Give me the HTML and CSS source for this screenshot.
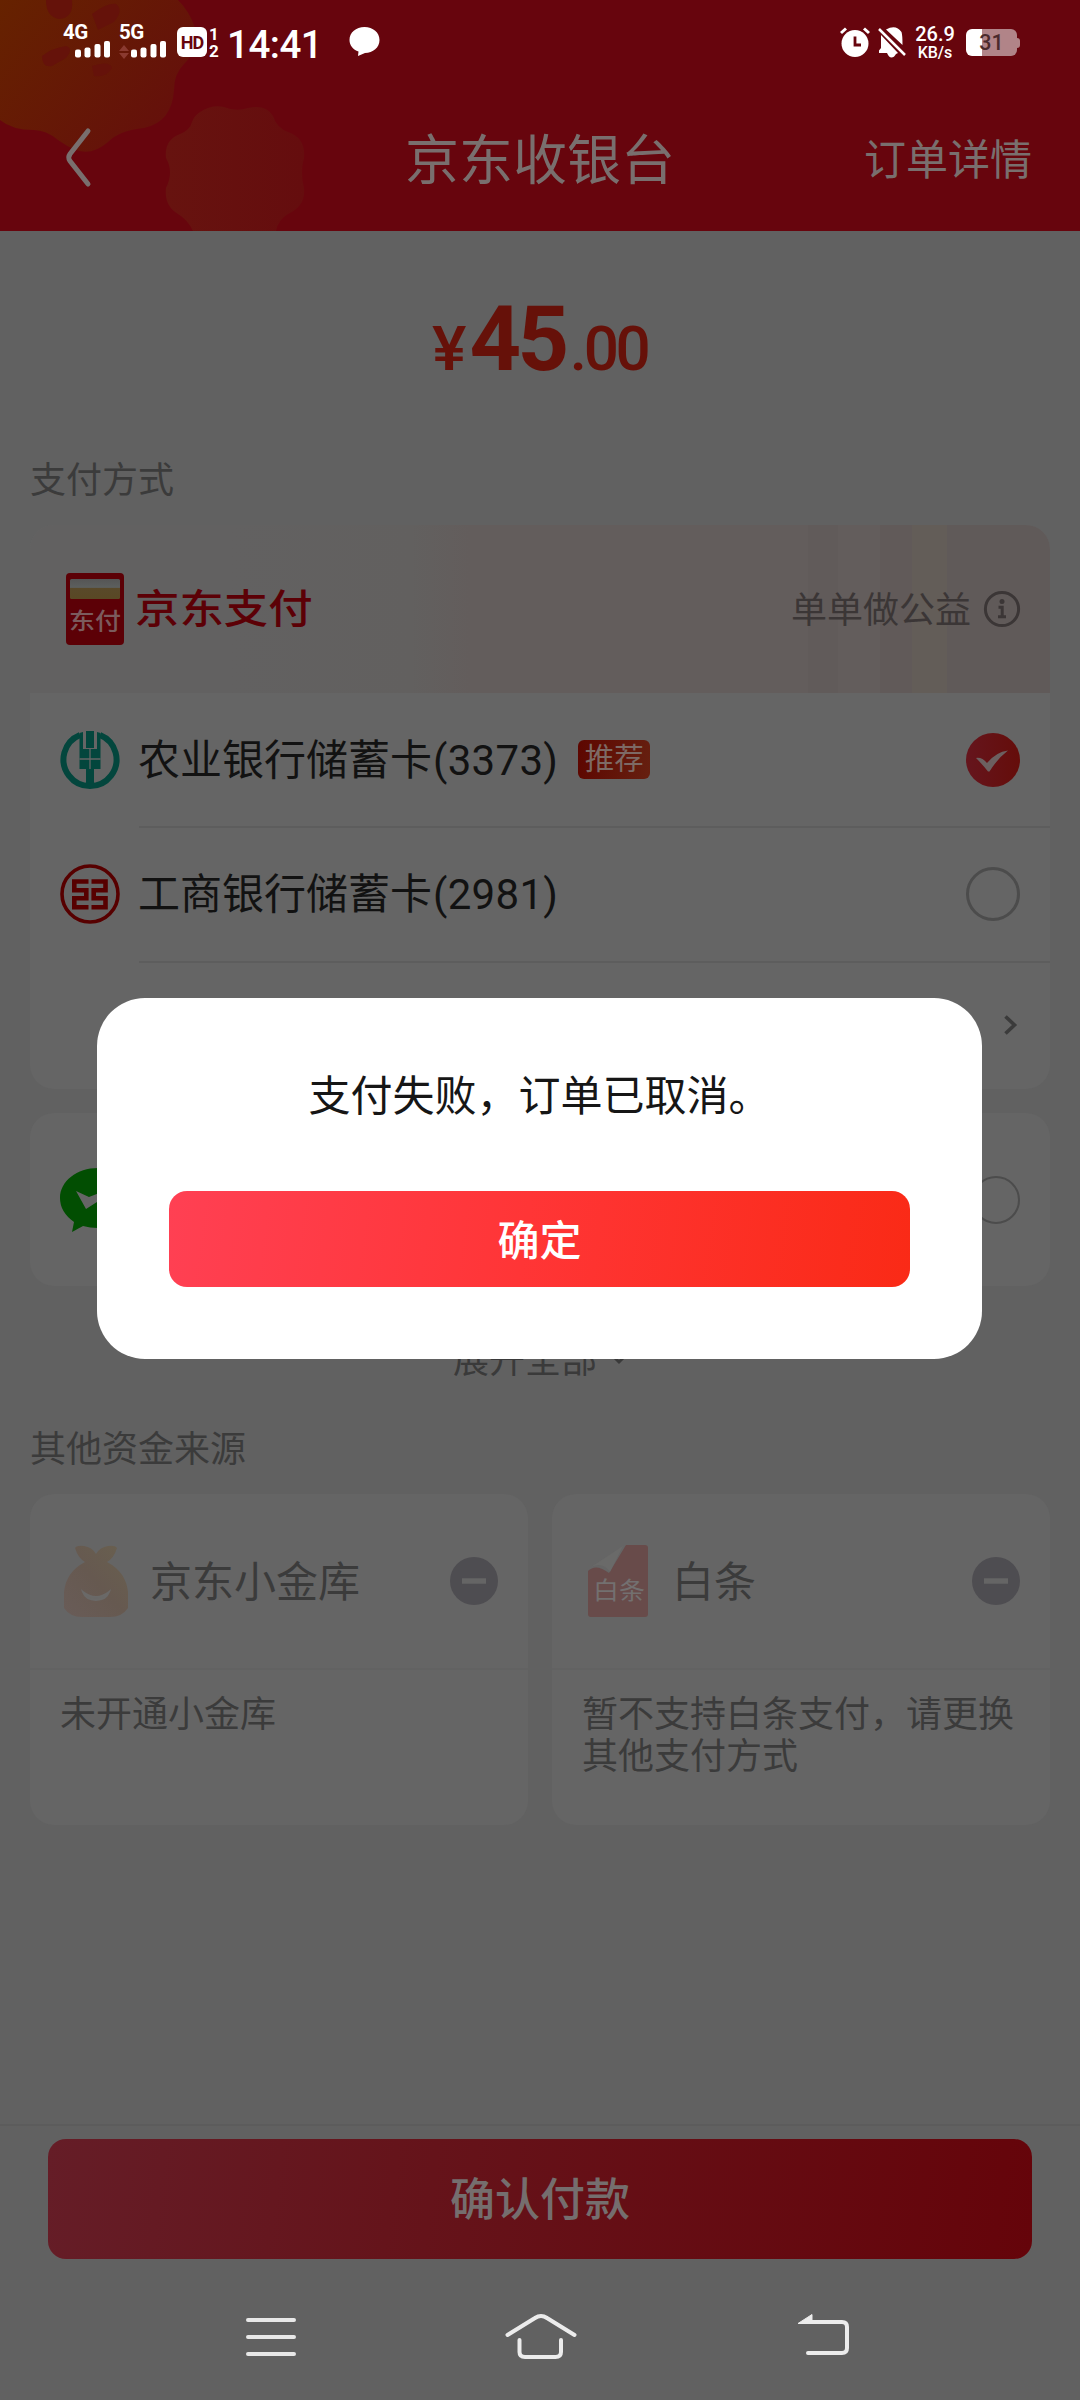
FILE: index.html
```html
<!DOCTYPE html>
<html lang="zh-CN">
<head>
<meta charset="utf-8">
<title>京东收银台</title>
<link rel="stylesheet" href="styles.css">
</head>
<body>
<header class="top">
  <svg class="top-art" width="320" height="231" viewBox="0 0 320 231" aria-hidden="true">
    <defs>
      <linearGradient id="flower" x1="0" y1="0" x2="1" y2=".6"><stop offset="0" stop-color="#662200"/><stop offset="1" stop-color="#65100b"/></linearGradient>
      <linearGradient id="flower2" x1="0" y1="0" x2="1" y2="0"><stop offset="0" stop-color="#67130f"/><stop offset="1" stop-color="#650d0e"/></linearGradient>
    </defs>
    <path fill="url(#flower)" d="M0 0H178Q190 12 195 28Q197 52 184 64Q174 74 174 90Q172 122 144 128Q120 130 108 142Q92 156 76 150Q66 146 58 140Q46 130 34 130Q12 130 0 120Z"/>
    <path fill="#65120a" d="M46 0H72Q74 18 59 19Q46 17 46 0ZM92 14Q108 2 116 4Q124 10 114 22L98 30ZM42 56Q52 48 66 46Q74 48 66 58L52 66Q42 68 42 56ZM92 66Q110 60 112 68Q106 78 94 76Z"/>
    <path fill="url(#flower2)" d="M200 112Q212 104 224 107Q236 112 248 108Q266 104 273 116Q277 128 288 132Q306 138 304 158Q300 172 304 188Q306 206 288 214Q278 220 276 231H193Q188 220 178 214Q164 206 166 188Q174 172 166 158Q164 140 180 134Q190 130 192 122Q194 116 200 112Z"/>
  </svg>
  <div class="status">
    <div class="status-left">
      <div class="sim"><span>4G</span><svg width="36" height="17" viewBox="0 0 36 17" fill="#fff"><rect x="0" y="8.500" width="6" height="8" rx="2"/><rect x="9.500" y="6.500" width="6" height="10" rx="2"/><rect x="19.500" y="3" width="6" height="13.500" rx="2"/><rect x="29" y="0" width="6" height="16.500" rx="2"/></svg></div>
      <div class="sim"><span>5G</span><svg width="48" height="19" viewBox="0 0 48 19"><path fill="#8a3a30" d="M5 4l5 6H0zM5 18l5-6H0z"/><g fill="#fff"><rect x="12" y="8.500" width="6" height="8" rx="2"/><rect x="21.500" y="6.500" width="6" height="10" rx="2"/><rect x="31.500" y="3" width="6" height="13.500" rx="2"/><rect x="41" y="0" width="6" height="16.500" rx="2"/></g></svg></div>
      <div class="hd">HD</div>
      <div class="hd-num"><span>1</span><span>2</span></div>
      <div class="clock">14:41</div>
      <svg class="bubble" width="31" height="31" viewBox="0 0 31 31"><path fill="#fff" d="M15.500 1C24 1 30.500 6.500 30.500 14S24 27 16 27l-7 3 .5-4.500C4 23.500.5 19.500.5 14 .5 6.500 7 1 15.500 1z"/></svg>
    </div>
    <div class="status-right">
      <svg width="30" height="30" viewBox="0 0 30 30"><circle cx="15" cy="16.500" r="13.500" fill="#fff"/><path d="M1 6l5-4.500M29 6l-5-4.500" stroke="#fff" stroke-width="3"/><path d="M15 9.500v8.500h6" fill="none" stroke="#67050d" stroke-width="2.800"/></svg>
      <svg width="28" height="31" viewBox="0 0 28 31"><path fill="#fff" d="M8 2.500Q18-3 23.500 5Q24.500 8 24.500 18zM3 8L20 26l-2 1Q16 30.500 13.500 30.500T9 26H1v-2.500l2-2.500z"/><path d="M1 2l26 26" stroke="#fff" stroke-width="2.500"/></svg>
      <div class="speed"><span>26.9</span><span>KB/s</span></div>
      <div class="battery"><span>31</span></div>
    </div>
  </div>
  <div class="bar">
    <svg width="28" height="61" viewBox="0 0 28 61"><path d="M24 4L6 27Q3.500 30.500 6 34L24 57" fill="none" stroke="#796f6e" stroke-width="5" stroke-linecap="round"/></svg>
    <h1>京东收银台</h1>
    <span class="detail">订单详情</span>
  </div>
</header>

<main>
  <div class="price"><span class="yen">¥</span><span class="int">45</span><span class="dec">.00</span></div>
  <h2>支付方式</h2>
  <section class="card methods">
    <div class="jdpay">
      <svg width="58" height="72" viewBox="0 0 58 72"><defs><linearGradient id="win" x2="0" y2="1"><stop offset="0" stop-color="#555"/><stop offset=".42" stop-color="#5c5f5e"/><stop offset=".46" stop-color="#59492a"/><stop offset="1" stop-color="#594824"/></linearGradient></defs><rect width="58" height="72" rx="4" fill="#5c0006"/><rect x="4" y="6" width="50" height="20" rx="1.500" fill="url(#win)"/><text x="29" y="64" text-anchor="middle" transform="scale(1 .88)" class="logo-text">东付</text></svg>
      <strong>京东支付</strong>
      <span class="charity">单单做公益</span>
      <svg width="38" height="38" viewBox="0 0 38 38"><circle cx="19" cy="19" r="16.600" fill="none" stroke="#3b3636" stroke-width="3"/><circle cx="19" cy="11.500" r="2.500" fill="#3b3636"/><path d="M15.500 17.200h3.700v9.300M15 26.800h8" fill="none" stroke="#3b3636" stroke-width="3"/></svg>
    </div>
    <div class="row">
      <svg width="60" height="60" viewBox="0 0 60 60"><path d="M20 5A26.500 26.500 0 1 0 40 5" fill="none" stroke="#03463d" stroke-width="6"/><path fill="#03463d" d="M19.500 3l3.500-1v17h14V2l3.500 1v36H34v19h-8V39h-6.500zM26 1h8v17h-8z"/><path d="M30 19v20M19.500 29h21" stroke="#656565" stroke-width="1.300"/></svg>
      <span class="name">农业银行储蓄卡<i>(3373)</i></span><em>推荐</em>
      <svg class="end" width="54" height="54" viewBox="0 0 54 54"><defs><linearGradient id="chk"><stop offset="0" stop-color="#65151d"/><stop offset="1" stop-color="#650d0a"/></linearGradient></defs><circle cx="27" cy="27" r="27" fill="url(#chk)"/><path d="M10 25q6-1 11 5Q30 19 42 17.500Q32 25 23.500 38.500H22Q16 31 10 25z" fill="#6c6060"/></svg>
    </div>
    <div class="row">
      <svg width="60" height="60" viewBox="0 0 60 60" fill="none" stroke="#570000"><circle cx="30" cy="30" r="28" stroke-width="3.600"/><path stroke-width="4.600" d="M28.500 17.500H14.300V26.300H26.300V34.300H14.300V43.300H28.500M31.500 17.500H45.500V26.300H33.700V34.300H45.500V43.300H31.500"/></svg>
      <span class="name">工商银行储蓄卡<i>(2981)</i></span>
      <b class="radio end"></b>
    </div>
    <div class="row more"><svg class="end" width="15" height="22" viewBox="0 0 15 22"><path d="M2.500 2.500L11.500 11l-9 8.500" fill="none" stroke="#3b3b3b" stroke-width="3.600"/></svg></div>
  </section>
  <section class="card wechat">
    <svg width="76" height="66" viewBox="0 0 76 66"><path fill="#024e02" d="M38 1C59 1 75 14 75 31S59 61 38 61q-8 0-15-2-4 2-11 6l2-10Q0 45 0 31C0 14 17 1 38 1z"/><path fill="#656565" d="M16 24l13 6L70 14 26 42z"/></svg>
    <b class="radio thin end"></b>
  </section>
  <div class="expand"><span>展开全部</span><svg width="16" height="12" viewBox="0 0 16 12"><path d="M2 2l6 6 6-6" fill="none" stroke="#3a3a3a" stroke-width="3"/></svg></div>
  <h2>其他资金来源</h2>
  <section class="funds">
    <article class="card">
      <div class="fund-head">
        <svg width="64" height="74" viewBox="0 0 64 74"><defs><linearGradient id="bag" x1="1" y1="0" x2="0" y2="1"><stop offset="0" stop-color="#69604f"/><stop offset=".5" stop-color="#665950"/><stop offset="1" stop-color="#695c58"/></linearGradient></defs><path fill="url(#bag)" d="M11 4Q13 1 20 2Q28 3 32 10Q36 3 44 2Q51 1 53 4Q50 14 43 18Q62 28 64 48V64Q58 73 46 73H18Q6 73 0 64V48Q2 28 21 18Q14 14 11 4z"/><path d="M19 48Q32 58 45 48Q42 56 32 56T19 48z" fill="#6a6968" stroke="#6a6968" stroke-width="2"/></svg>
        <strong>京东小金库</strong>
        <svg class="end" width="48" height="48" viewBox="0 0 48 48"><circle cx="24" cy="24" r="24" fill="#4e4d51"/><path d="M12 24h24" stroke="#656565" stroke-width="5.500"/></svg>
      </div>
      <p>未开通小金库</p>
    </article>
    <article class="card">
      <div class="fund-head">
        <svg width="60" height="72" viewBox="0 0 60 72"><path fill="#684b4a" d="M38 0H57Q60 0 60 3V69Q60 72 57 72H3Q0 72 0 69V26Q8 18 21 28z"/><path fill="#6a6a69" d="M35 1L3 22Q15 16 22 27z"/><text x="31" y="60" text-anchor="middle" transform="scale(1 .9)" class="bt-text">白条</text></svg>
        <strong>白条</strong>
        <svg class="end" width="48" height="48" viewBox="0 0 48 48"><circle cx="24" cy="24" r="24" fill="#4e4d51"/><path d="M12 24h24" stroke="#656565" stroke-width="5.500"/></svg>
      </div>
      <p>暂不支持白条支付，请更换其他支付方式</p>
    </article>
  </section>
</main>

<footer>
  <button class="pay">确认付款</button>
  <nav>
    <svg width="50" height="44" viewBox="0 0 50 44"><path d="M2 5h46M2 22h46M2 39h46" stroke="#e8e8e8" stroke-width="4" stroke-linecap="round"/></svg>
    <svg width="72" height="48" viewBox="0 0 72 48" fill="none" stroke="#ececec" stroke-width="4" stroke-linecap="round"><path d="M2.500 22L30 5Q36 1 42 5L69.500 22M14.500 27V39Q14.500 44 20 44H50.500Q56 44 56 39V27" /></svg>
    <svg width="54" height="46" viewBox="0 0 54 46"><path d="M12 8H45Q50 8 50 13V34Q50 39 45 39H11" fill="none" stroke="#ececec" stroke-width="4" stroke-linecap="round"/><path fill="#ececec" stroke="#ececec" stroke-linejoin="round" d="M1 9.500L15 .5v9z"/></svg>
  </nav>
</footer>

<div class="modal" role="dialog">
  <p>支付失败，订单已取消。</p>
  <button>确定</button>
</div>
</body>
</html>
```

FILE: styles.css
```css
* { box-sizing: border-box; margin: 0; padding: 0; }
body {
  width: 1080px; height: 2400px; overflow: hidden; position: relative;
  display: flex; flex-direction: column;
  background: #616161; color: #121212;
  font-family: Roboto, "Noto Sans CJK SC", sans-serif;
}
svg { display: block; flex: none; }
button { border: 0; font-family: inherit; display: block; }
i, em { font-style: normal; }
.end { margin-left: auto; }

/* Header */
.top { position: relative; height: 231px; background: #67050d; }
.top-art { position: absolute; left: 0; top: 0; }
.status { position: relative; display: flex; justify-content: space-between; height: 84px; padding: 24px 63px 0 63px; color: #fff; }
.status-left, .status-right { display: flex; align-items: flex-start; }
.sim { display: flex; flex-direction: column; align-items: flex-end; width: 48px; height: 36px; margin-right: 8px; }
.sim:nth-child(2) { margin-right: 10px; }
.sim span { align-self: flex-start; font: 700 20.500px/17px Roboto, sans-serif; letter-spacing: -.5px; }
.hd { width: 30px; height: 30px; margin-top: 3px; border-radius: 6px; background: #fff; color: #67050d; font: 700 18px/31px Roboto, sans-serif; text-align: center; letter-spacing: -1px; }
.hd-num { display: flex; flex-direction: column; width: 12px; margin: 2px 0 0 1px; font: 700 17px/17px Roboto, sans-serif; text-align: center; }
.clock { margin: -1px 0 0 7px; width: 91px; font: 500 38.500px/43px Roboto, sans-serif; letter-spacing: -.5px; }
.bubble { margin: 2px 0 0 31px; }
.status-right { gap: 8px; }
.status-right svg { margin-top: 3px; }
.speed { width: 42px; margin: 0 2px 0 1px; display: flex; flex-direction: column; align-items: center; font: 500 20px/20px Roboto, sans-serif; }
.speed span + span { font-size: 16px; line-height: 17px; }
.battery { position: relative; width: 51px; height: 27px; margin: 5px 0 0; border-radius: 6px; background: linear-gradient(90deg, #fff 31%, #b18488 31%); color: #4b2a2d; font: 500 21.500px/28px Roboto, sans-serif; text-align: center; }
.battery::after { content: ""; position: absolute; right: -3px; top: 9px; width: 3px; height: 10px; border-radius: 0 3px 3px 0; background: #b18488; }
.status-right > svg:first-child { margin-left: 3px; }
.status-right > svg:nth-child(2) { margin-right: -1px; }
.bar { position: relative; display: grid; grid-template-columns: 1fr auto 1fr; align-items: center; height: 147px; padding: 0 48px 0 64px; color: #796f6e; }
.bar svg { margin-top: -1px; }
.bar h1 { font-size: 54px; font-weight: 400; line-height: 60px; margin: 9px 0 0 -16px; }
.detail { justify-self: end; font-size: 42px; line-height: 50px; margin-top: 7px; }

/* Body */
main { flex: 1; }
.price { display: flex; justify-content: center; align-items: baseline; height: 197px; padding-top: 59px; color: #661109; font-weight: 500; line-height: 100px; }
.yen { width: 37px; font: 500 54px/1 Roboto, sans-serif; transform: scale(1.2, 1.12); transform-origin: 0 86%; }
.int { font-size: 90px; font-weight: 700; letter-spacing: -3.500px; }
.dec { font-size: 62px; letter-spacing: -3.300px; margin-left: 4px; }
h2 { padding-left: 30px; font-size: 36px; line-height: 42px; font-weight: 400; color: #3b3b3b; margin-top: 32px; }
.card { background: #656565; border-radius: 24px; }
.methods { margin: 23px 30px 0; height: 564px; overflow: hidden; }
.jdpay {
  display: flex; align-items: center; height: 168px; padding: 0 29px 0 36px;
  background: linear-gradient(90deg, #626161 200px, #62605f 381px, #635d5c 440px 778px, #615b5a 778px 808px, #635d5c 808px 850px, #615a59 850px 882px, #635d58 882px 917px, #605a59 917px);
}
.logo-text { font: 500 26px "Noto Sans CJK SC", sans-serif; fill: #7b5b5d; }
.jdpay strong { margin-left: 11px; font-weight: 500; font-size: 40px; color: #5c0006; line-height: 50px; margin-top: 1px; transform: scaleX(1.11); transform-origin: 0 50%; }
.charity { margin: -4px 12px 0 auto; font-size: 36px; color: #3b3636; }
.row { position: relative; display: flex; align-items: center; height: 135px; padding: 0 30px; }
.row:nth-child(2) { height: 133px; }
.row + .row::before { content: ""; position: absolute; left: 109px; right: 0; top: 0; height: 2px; background: #5d5d5d; }
.row.more { height: 128px; padding-right: 32px; }
.name { margin: 2px 0 0 18px; font-size: 42px; line-height: 50px; }
.name i { letter-spacing: .3px; margin-left: 1px; }
.row em { width: 72px; height: 39px; margin: -1px 0 0 20px; border-radius: 6px; background: linear-gradient(100deg, #5d0600, #662010); color: #7d6a65; font-size: 29.500px; line-height: 38px; text-align: center; }
.radio { width: 54px; height: 54px; border: 3px solid #4c4c4c; border-radius: 50%; }
.radio.thin { width: 48px; height: 48px; border-width: 2px; }
.wechat { display: flex; align-items: center; height: 173px; margin: 24px 30px 0; padding: 0 30px; }
.expand { display: flex; justify-content: center; align-items: center; gap: 14px; height: 50px; margin-top: 46px; font-size: 36px; color: #3a3a3a; }
.expand svg { margin-top: 6px; }
.expand + h2 { margin-top: 47px; }
.funds { display: grid; grid-template-columns: 498px 498px; gap: 24px; margin: 23px 30px 0; color: #3b3b3b; }
.funds .card { height: 331px; }
.fund-head { display: flex; align-items: center; height: 176px; padding: 0 30px 0 34px; border-bottom: 2px solid #626262; }
.fund-head strong { font-size: 42px; font-weight: 400; line-height: 50px; margin: 3px 0 0 22px; }
.card:nth-child(2) .fund-head { padding-left: 36px; }
.card:nth-child(2) .fund-head strong { margin-left: 24px; }
.bt-text { font: 400 26px "Noto Sans CJK SC", sans-serif; fill: #737070; }
.funds p { padding: 24px 30px; font-size: 36px; line-height: 42px; }

/* Bottom */
footer { height: 276px; border-top: 2px solid #5c5c5c; }
.pay { width: 984px; height: 120px; margin: 13px 48px 0; padding-bottom: 6px; border-radius: 18px; background: linear-gradient(97deg, #651d27, #65141b 35%, #65040a); color: #756e6e; font-size: 45px; font-weight: 500; }
nav { display: flex; align-items: center; padding-left: 246px; margin-top: 54px; }
nav svg:nth-child(2) { margin-left: 209px; }
nav svg:nth-child(3) { margin-left: 220px; }

/* Dialog */
.modal { position: absolute; left: 97px; top: 998px; width: 885px; height: 361px; padding: 73px 72px 70px; border-radius: 48px; background: #fff; }
.modal p { font-size: 42px; line-height: 52px; text-align: center; color: #161616; }
.modal button { width: 741px; height: 96px; margin-top: 68px; padding-bottom: 4px; border-radius: 18px; background: linear-gradient(98deg, #ff4053, #ff3536 48%, #fa2a16); color: #fff; font-size: 42px; font-weight: 500; }
```
